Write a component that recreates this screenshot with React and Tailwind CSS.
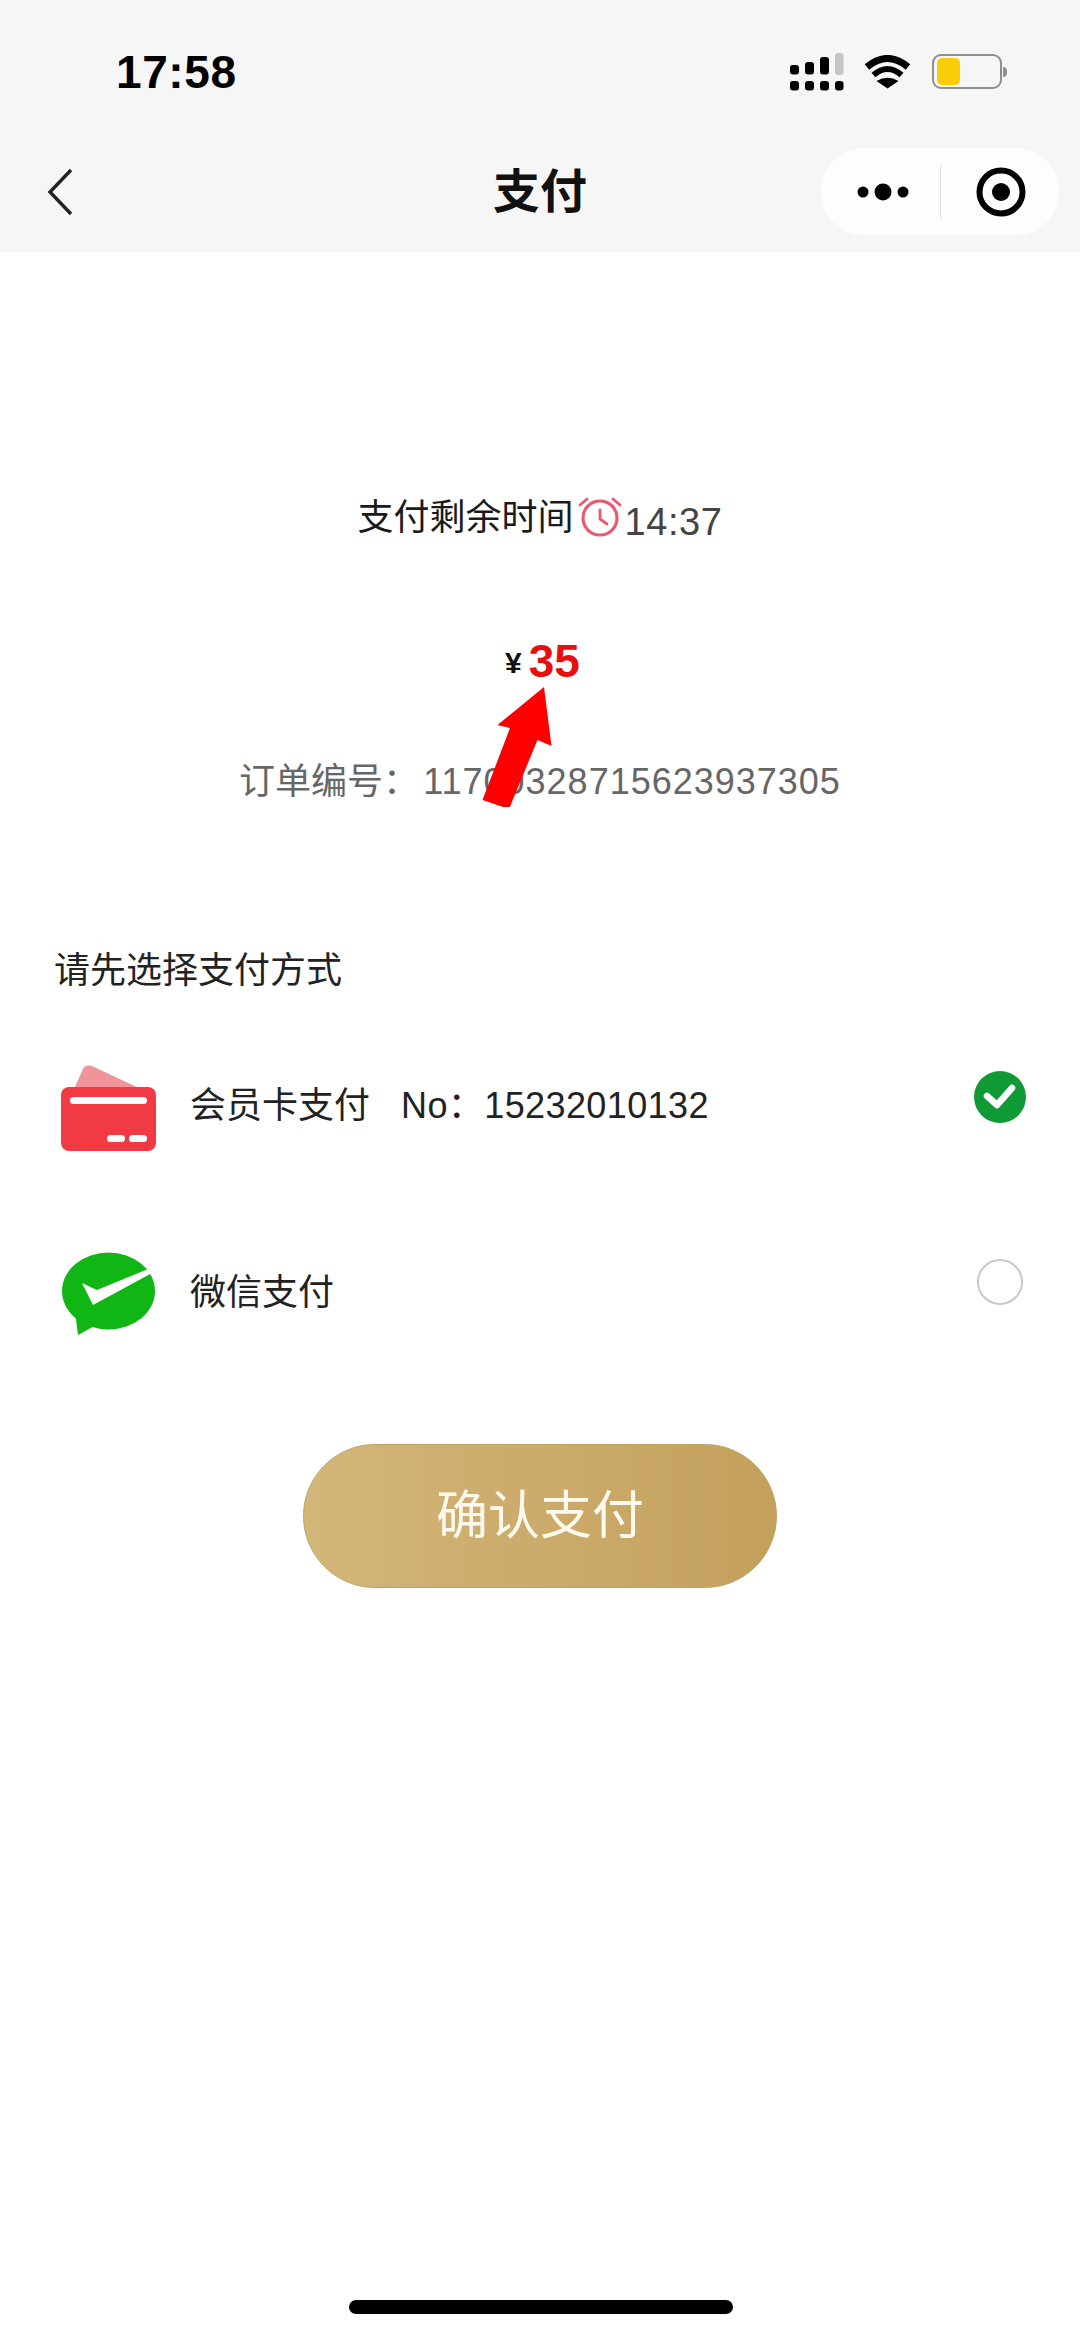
import React from "react";

const FONT = "font-['Liberation_Sans','Noto_Sans_CJK_SC',sans-serif]";

function SignalIcon() {
  return (
    <svg width="54" height="38" viewBox="0 0 54 38">
      <rect x="0" y="12" width="9" height="9.5" rx="3" fill="#000" />
      <rect x="15" y="9" width="9" height="12.5" rx="3" fill="#000" />
      <rect x="30" y="4" width="9" height="17.5" rx="3" fill="#000" />
      <rect x="45" y="0" width="8.5" height="22" rx="3" fill="#c4c4c4" />
      <rect x="0" y="28" width="9" height="9.5" rx="3" fill="#000" />
      <rect x="15" y="28" width="9" height="9.5" rx="3" fill="#000" />
      <rect x="30" y="28" width="9" height="9.5" rx="3" fill="#000" />
      <rect x="45" y="28" width="8.5" height="9.5" rx="3" fill="#000" />
    </svg>
  );
}

function WifiIcon() {
  return (
    <svg width="47" height="34" viewBox="0 0 47 34">
      <path d="M3 12 Q23.5 -5 44 12" fill="none" stroke="#000" strokeWidth="7" />
      <path d="M9.5 20 Q23.5 8 37.5 20" fill="none" stroke="#000" strokeWidth="6" />
      <path d="M12.5 26 Q23.5 19.5 34.5 26 L23.5 33.5 Z" fill="#000" />
    </svg>
  );
}

function BatteryIcon() {
  return (
    <div className="flex items-center gap-[1px]">
      <div className="w-[70px] h-[35px] rounded-[9px] border-[2.5px] border-[#8f8f8f] pl-[3px] py-[2px] bg-[#f6f6f6]">
        <div className="w-[23px] h-full rounded-[5px] bg-[#fbcd09]" />
      </div>
      <div className="w-[4px] h-[10px] rounded-r-full bg-[#8f8f8f]" />
    </div>
  );
}

function AlarmIcon() {
  return (
    <svg width="44" height="44" viewBox="0 0 44 44" fill="none" stroke="#e85a70" strokeLinecap="round">
      <circle cx="22" cy="22" r="17" strokeWidth="3.2" />
      <path d="M22 14 V23 L29 28" strokeWidth="2.8" />
      <path d="M2 9 L9 3" strokeWidth="2.8" />
      <path d="M42 9 L35 3" strokeWidth="2.8" />
    </svg>
  );
}

function CardIcon() {
  return (
    <svg width="95" height="86" viewBox="0 0 95 86">
      <path d="M13 24 L22 4 Q24 -1 31 1 L80 24 Z" fill="#f0949c" />
      <rect x="0" y="22" width="95" height="64" rx="8" fill="#f23a45" />
      <rect x="9" y="32" width="77" height="7" rx="3.5" fill="#fff" />
      <rect x="46" y="70" width="18" height="7" rx="3.5" fill="#fff" />
      <rect x="68" y="70" width="18" height="7" rx="3.5" fill="#fff" />
    </svg>
  );
}

function WechatIcon() {
  return (
    <svg width="94" height="84" viewBox="0 0 94 84">
      <ellipse cx="47.5" cy="39" rx="46.5" ry="38.5" fill="#10b614" />
      <path d="M14 60 L17 83 L37 72 Z" fill="#10b614" />
      <path d="M21 31 L36 38 L87 17 L91 21 L32 53 Z" fill="#fff" />
    </svg>
  );
}

function CheckedIcon() {
  return (
    <svg width="52" height="52" viewBox="0 0 52 52">
      <circle cx="26" cy="26" r="26" fill="#0f9a35" />
      <path d="M13 25 L23 34 L38 17" fill="none" stroke="#fff" strokeWidth="6.5" strokeLinecap="round" strokeLinejoin="round" />
    </svg>
  );
}

export default function App() {
  return (
    <div className={`${FONT} min-h-[2337px] bg-white`}>
      <div className="h-[252px] bg-[#f6f6f6]">
        <div className="h-[148px] pt-[50px] pl-[116px] pr-[73px] flex justify-between">
          <div className="h-[44px] leading-[44px] text-[46px] font-bold text-black tracking-[0.6px]">17:58</div>
          <div className="flex items-start pt-[3px]">
            <SignalIcon />
            <div className="ml-[20px] mt-[2px]"><WifiIcon /></div>
            <div className="ml-[21px] mt-[1px]"><BatteryIcon /></div>
          </div>
        </div>
        <div className="h-[87px] grid grid-cols-[1fr_auto_1fr] items-center">
          <div className="pl-[46px]">
            <svg width="28" height="48" viewBox="0 0 28 48" fill="none" stroke="#222" strokeWidth="3.4">
              <path d="M25 2 L4 24 L25 46" />
            </svg>
          </div>
          <div className="text-[47px] leading-[50px] font-bold text-[#111]">支付</div>
          <div className="flex justify-end pr-[21px]">
            <div className="w-[238px] h-[87px] rounded-full bg-[#fdfdfd] flex items-center">
              <svg className="ml-[36px]" width="52" height="20" viewBox="0 0 52 20">
                <circle cx="6" cy="10" r="5.5" fill="#000" />
                <circle cx="26" cy="10" r="8.5" fill="#000" />
                <circle cx="46" cy="10" r="5.5" fill="#000" />
              </svg>
              <div className="ml-[31px] w-px h-[54px] bg-[#dcdcdc]" />
              <svg className="ml-[35px]" width="50" height="50" viewBox="0 0 50 50">
                <circle cx="25" cy="25" r="21.5" fill="none" stroke="#000" strokeWidth="6" />
                <circle cx="25" cy="25" r="9" fill="#000" />
              </svg>
            </div>
          </div>
        </div>
      </div>

      <div className="mt-[244px] h-[44px] flex justify-center items-center">
        <span className="text-[36px] leading-[44px] text-[#1a1a1a]">支付剩余时间</span>
        <span className="ml-[5px]"><AlarmIcon /></span>
        <span className="ml-[2px] mt-[8px] text-[38px] leading-[44px] text-[#444] tracking-[0.6px]">14:37</span>
      </div>

      <div className="mt-[93px] h-[56px] flex justify-center items-center pl-[5px]">
        <span className="mt-[4px] text-[30px] leading-[56px] font-bold text-[#111]">¥</span>
        <span className="ml-[7px] text-[46px] leading-[56px] font-bold text-[#e60f0f]">35</span>
      </div>

      <div className="relative mt-[71px] h-[44px] flex justify-center">
        <span className="text-[36px] leading-[44px] text-[#666]">
          订单编号：<span className="ml-[4px] tracking-[1px]">11700328715623937305</span>
        </span>
        <svg className="absolute left-[470px] top-[-83px]" width="95" height="130" viewBox="470 677 95 130">
          <path d="M544 687 L497.5 725 L510 728 L482.5 800 L509 809 L537.5 740 L551.5 746 Z" fill="#fe0000" />
        </svg>
      </div>

      <div className="mt-[145px] pl-[54px] text-[36px] leading-[44px] text-[#222]">请先选择支付方式</div>

      <div className="mt-[72px] pl-[61px] pr-[54px] flex">
        <CardIcon />
        <div className="ml-[34px] mt-[19px] text-[36px] leading-[44px] text-[#222] whitespace-nowrap">
          会员卡支付<span className="ml-[31px] tracking-[0.4px]">No：<span className="tracking-[0.4px]">15232010132</span></span>
        </div>
        <div className="ml-auto mt-[6px]"><CheckedIcon /></div>
      </div>

      <div className="mt-[101px] pl-[61px] pr-[57px] flex">
        <WechatIcon />
        <div className="ml-[35px] mt-[19px] text-[36px] leading-[44px] text-[#222]">微信支付</div>
        <div className="ml-auto mt-[7px] w-[46px] h-[46px] rounded-full border-2 border-[#c8c8c8]" />
      </div>

      <div className="mt-[108px] flex justify-center">
        <div className="w-[474px] h-[144px] rounded-full border border-[#bda468] bg-gradient-to-r from-[#d3b67a] to-[#c4a05c] flex items-center justify-center text-[52px] text-[#fff9ee]">
          确认支付
        </div>
      </div>

      <div className="mt-[712px] flex justify-center">
        <div className="w-[384px] h-[14px] rounded-full bg-black ml-[2px]" />
      </div>
    </div>
  );
}
